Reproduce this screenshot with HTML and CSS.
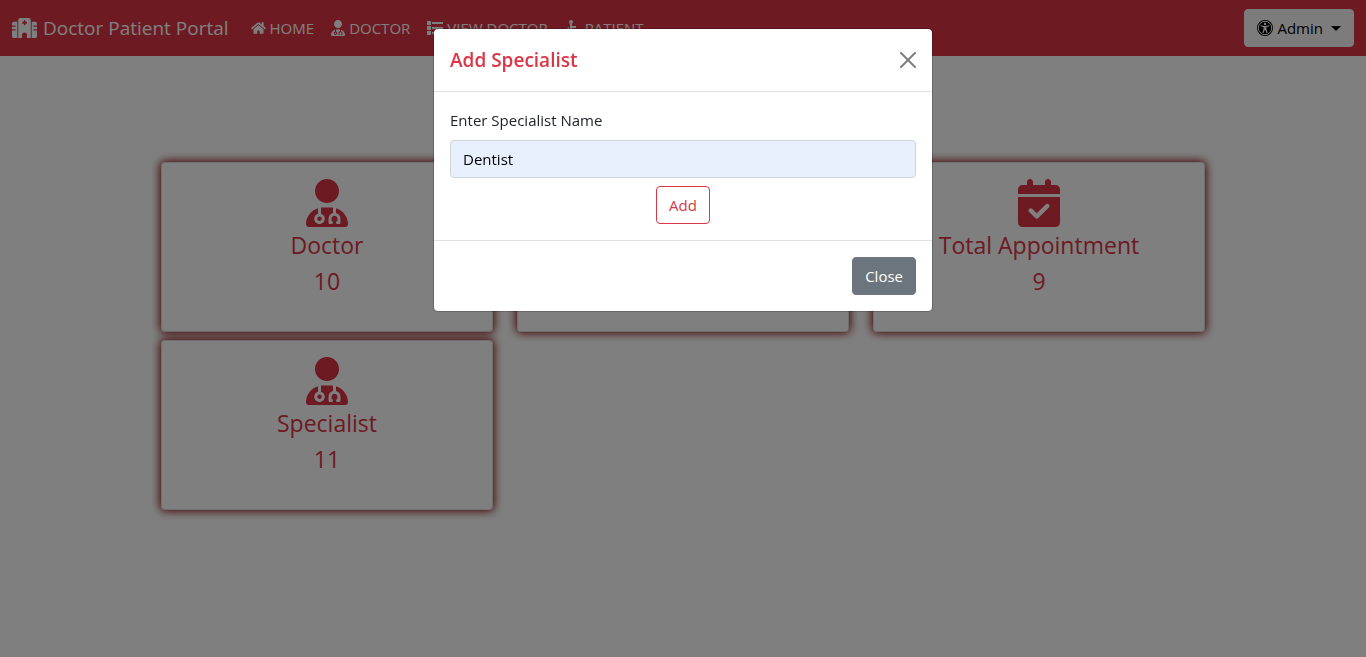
FILE: index.html
```html
<!DOCTYPE html>
<html lang="en">
<head>
<meta charset="utf-8">
<meta name="viewport" content="width=device-width, initial-scale=1">
<title>Doctor Patient Portal</title>
<link rel="stylesheet" href="styles.css">
</head>
<body>
<svg class="sprite" aria-hidden="true">
  <symbol id="doctor" viewBox="0 0 448 512"><path d="M224 256c70.7 0 128-57.3 128-128S294.7 0 224 0S96 57.3 96 128s57.3 128 128 128zm-96 55.2C54 332.9 0 401.3 0 482.3C0 498.7 13.3 512 29.7 512H418.3c16.4 0 29.7-13.3 29.7-29.7c0-81-54-149.4-128-171.1V362c27.6 7.1 48 32.2 48 62v40c0 8.8-7.2 16-16 16H336c-8.8 0-16-7.2-16-16s7.2-16 16-16V424c0-17.7-14.3-32-32-32s-32 14.3-32 32v24c8.8 0 16 7.2 16 16s-7.2 16-16 16H256c-8.8 0-16-7.2-16-16V424c0-29.8 20.4-54.9 48-62V304.900c-6-.6-12.100-.9-18.300-.9H178.300c-6.200 0-12.300 .3-18.300 .9v65.400c23.100 6.900 40 28.300 40 53.700c0 30.900-25.100 56-56 56s-56-25.100-56-56c0-25.400 16.900-46.800 40-53.700V311.200zM144 448c13.300 0 24-10.700 24-24s-10.700-24-24-24s-24 10.700-24 24s10.700 24 24 24z"/></symbol>
</svg>

<nav class="navbar">
  <a class="brand" href="#">
    <svg class="brand-icon" viewBox="0 0 640 512" aria-hidden="true"><path fill-rule="evenodd" d="M208 0H432a48 48 0 0 1 48 48V512H384V432a64 64 0 0 0-128 0v80H160V48A48 48 0 0 1 208 0ZM304 64v32h-32a12 12 0 0 0-12 12v24a12 12 0 0 0 12 12h32v32a12 12 0 0 0 12 12h12a12 12 0 0 0 12-12v-32h32a12 12 0 0 0 12-12v-24a12 12 0 0 0-12-12h-32V64a12 12 0 0 0-12-12h-12a12 12 0 0 0-12 12Z"/><path d="M48 96h88v416H48a48 48 0 0 1-48-48V320h80a16 16 0 0 0 0-32H0v-64h80a16 16 0 0 0 0-32H0v-48A48 48 0 0 1 48 96ZM592 96h-88v416h88a48 48 0 0 0 48-48V320h-80a16 16 0 0 1 0-32h80v-64h-80a16 16 0 0 1 0-32h80v-48a48 48 0 0 0-48-48Z"/></svg>
    Doctor Patient Portal</a>
  <div class="nav-links">
    <a class="nav-link" href="#"><svg class="icon-home" viewBox="0 32 576 448" aria-hidden="true"><path d="M280.37 148.26L96 300.11V464a16 16 0 0 0 16 16l112.06-.29a16 16 0 0 0 15.92-16V368a16 16 0 0 1 16-16h64a16 16 0 0 1 16 16v95.64a16 16 0 0 0 16 16.05L464 480a16 16 0 0 0 16-16V300L295.67 148.26a12.19 12.19 0 0 0-15.3 0zM571.6 251.47L488 182.56V44.05a12 12 0 0 0-12-12h-56a12 12 0 0 0-12 12v72.61L318.47 43a48 48 0 0 0-61 0L4.34 251.47a12 12 0 0 0-1.6 16.9l25.5 31A12 12 0 0 0 45.15 301l235.22-193.74a12.19 12.19 0 0 1 15.3 0L530.9 301a12 12 0 0 0 16.9-1.6l25.5-31a12 12 0 0 0-1.7-16.93z"/></svg>HOME</a>
    <a class="nav-link" href="#"><svg class="icon-doctor" aria-hidden="true"><use href="#doctor"/></svg>DOCTOR</a>
    <a class="nav-link" href="#"><svg class="icon-list" viewBox="0 0 16 16" aria-hidden="true"><path d="M0 1h4v4H0zM0 6h4v4H0zM0 11h4v4H0zM5 2h11v2H5zM5 7h11v2H5zM5 12h11v2H5z"/></svg>VIEW DOCTOR</a>
    <a class="nav-link" href="#"><svg class="icon-chair" viewBox="0 0 16 16" aria-hidden="true"><circle cx="6" cy="2" r="2"/><path d="M5 4h2v2h4v2H7v1h5l2 4 1-1 1 2-3 1-2-4H5zM4 7v2a3.500 3.500 0 1 0 5 4h2A5 5 0 1 1 4 7z"/></svg>PATIENT</a>
  </div>
  <button class="btn btn-light" type="button"><svg class="icon-access" viewBox="0 0 16 16" aria-hidden="true"><circle cx="8" cy="8" r="8"/><circle class="ring" cx="8" cy="8" r="6.700"/><path class="figure" d="M8 2.800a1.200 1.200 0 1 1 0 2.400a1.200 1.200 0 0 1 0-2.400ZM3.800 5.300L7 6.100h2l3.200-.8.300.9-3 .9v2l1.100 3.700-1 .4L8.300 10h-.6l-1.300 3.200-1-.4 1.100-3.700v-2l-3-.9z"/></svg>Admin<span class="caret"></span></button>
</nav>

<main class="dashboard">
  <section class="card">
    <svg class="card-icon" aria-hidden="true"><use href="#doctor"/></svg>
    <p class="card-text">Doctor<br>10</p>
  </section>
  <section class="card"></section>
  <section class="card">
    <svg class="card-icon" viewBox="0 0 448 512" aria-hidden="true"><path fill-rule="evenodd" d="M128 0c17.7 0 32 14.3 32 32V64H288V32c0-17.7 14.3-32 32-32s32 14.3 32 32V64h48c26.5 0 48 21.5 48 48v48H0V112C0 85.5 21.5 64 48 64H96V32c0-17.7 14.3-32 32-32zM0 192H448V464c0 26.5-21.5 48-48 48H48c-26.5 0-48-21.5-48-48V192zM329 305c9.4-9.4 9.4-24.6 0-33.9s-24.6-9.4-33.9 0l-95 95-47-47c-9.4-9.4-24.6-9.4-33.9 0s-9.4 24.6 0 33.9l64 64c9.4 9.4 24.6 9.4 33.9 0L329 305z"/></svg>
    <p class="card-text">Total Appointment<br>9</p>
  </section>
  <section class="card">
    <svg class="card-icon" aria-hidden="true"><use href="#doctor"/></svg>
    <p class="card-text">Specialist<br>11</p>
  </section>
</main>

<div class="backdrop">
  <div class="modal" role="dialog" aria-modal="true" aria-labelledby="modal-title">
    <header class="modal-header">
      <h1 class="modal-title" id="modal-title">Add Specialist</h1>
      <button class="btn-close" type="button" aria-label="Close dialog"><svg class="icon-close" viewBox="0 0 16 16" aria-hidden="true"><path d="M.293.293a1 1 0 0 1 1.414 0L8 6.586 14.293.293a1 1 0 1 1 1.414 1.414L9.414 8l6.293 6.293a1 1 0 0 1-1.414 1.414L8 9.414l-6.293 6.293a1 1 0 0 1-1.414-1.414L6.586 8 .293 1.707a1 1 0 0 1 0-1.414z"/></svg></button>
    </header>
    <form class="modal-body">
      <label class="form-label" for="specialist">Enter Specialist Name</label>
      <input class="form-control" id="specialist" type="text" value="Dentist">
      <button class="btn btn-outline" type="button">Add</button>
    </form>
    <footer class="modal-footer">
      <button class="btn btn-secondary" type="button">Close</button>
    </footer>
  </div>
</div>
</body>
</html>
```
FILE: styles.css
```css
* { box-sizing: border-box; }

body {
  margin: 0;
  min-height: 100vh;
  background: #fff;
  color: #212529;
  font: 15px/24px "Open Sans", "Noto Sans", sans-serif;
}

svg { fill: currentColor; flex: none; }
.sprite { position: absolute; width: 0; height: 0; }

.navbar {
  display: flex;
  align-items: center;
  min-height: 56px;
  padding: 8px 12px;
  background: #dc3545;
}

.brand {
  display: flex;
  align-items: center;
  gap: 6px;
  margin-right: 14px;
  color: #fff;
  font-size: 19px;
  line-height: 30px;
  text-decoration: none;
  white-space: nowrap;
}
.brand-icon { width: 25px; height: 20px; }

.nav-links { display: flex; flex: 1; gap: 1px; }
.nav-link {
  display: flex;
  align-items: center;
  gap: 4px;
  padding: 8px;
  color: #fff;
  text-decoration: none;
  white-space: nowrap;
}
.icon-home { width: 15px; height: 12px; }
.icon-doctor { width: 14px; height: 16px; }
.icon-list, .icon-chair, .icon-access, .icon-close { width: 16px; height: 16px; }

.btn {
  display: inline-flex;
  align-items: center;
  padding: 6px 12px;
  border: 1px solid transparent;
  border-radius: 4px;
  font: inherit;
  cursor: pointer;
}
.btn-light { gap: 4px; background: #f8f9fa; border-color: #f8f9fa; color: #000; }
.ring { fill: none; stroke: #f8f9fa; stroke-width: 1; }
.figure { fill: #f8f9fa; }
.caret {
  margin-left: 4px;
  border: 5px solid transparent;
  border-top-color: currentColor;
  border-bottom: 0;
}

.dashboard {
  display: grid;
  grid-template-columns: repeat(3, 1fr);
  gap: 8px 24px;
  max-width: 1140px;
  margin: 0 auto;
  padding: 106px 48px 48px;
}
.card {
  display: flex;
  flex-direction: column;
  align-items: center;
  padding: 16px;
  border: 1px solid rgba(0, 0, 0, .125);
  border-radius: 4px;
  background: #fff;
  box-shadow: 0 0 10px 1px maroon;
  color: #dc3545;
  text-align: center;
}
.card-icon { width: 42px; height: 48px; }
.card-text { margin: 0 0 16px; font-size: 23px; line-height: 36px; }

.backdrop {
  position: fixed;
  inset: 0;
  padding: 28px 8px;
  background: rgba(0, 0, 0, .5);
}
.modal {
  max-width: 500px;
  margin: 0 auto;
  border: 1px solid rgba(0, 0, 0, .2);
  border-radius: 5px;
  background: #fff;
  background-clip: padding-box;
}
.modal-header {
  display: flex;
  align-items: center;
  justify-content: space-between;
  padding: 16px;
  border-bottom: 1px solid #dee2e6;
}
.modal-title { margin: 0; color: #dc3545; font-size: 19px; font-weight: 600; line-height: 30px; }
.btn-close { display: flex; padding: 0; border: 0; background: none; color: #000; opacity: .5; cursor: pointer; }
.modal-body { display: flex; flex-direction: column; gap: 8px; padding: 16px; }
.form-control {
  width: 100%;
  height: 38px;
  padding: 6px 12px;
  border: 1px solid #ced4da;
  border-radius: 4px;
  background: #e8f0fe;
  color: #000;
  font: inherit;
}
.btn-outline { align-self: center; border-color: #dc3545; background: #fff; color: #dc3545; }
.modal-footer {
  display: flex;
  justify-content: flex-end;
  padding: 16px;
  border-top: 1px solid #dee2e6;
}
.btn-secondary { border-color: #6c757d; background: #6c757d; color: #fff; }
```
